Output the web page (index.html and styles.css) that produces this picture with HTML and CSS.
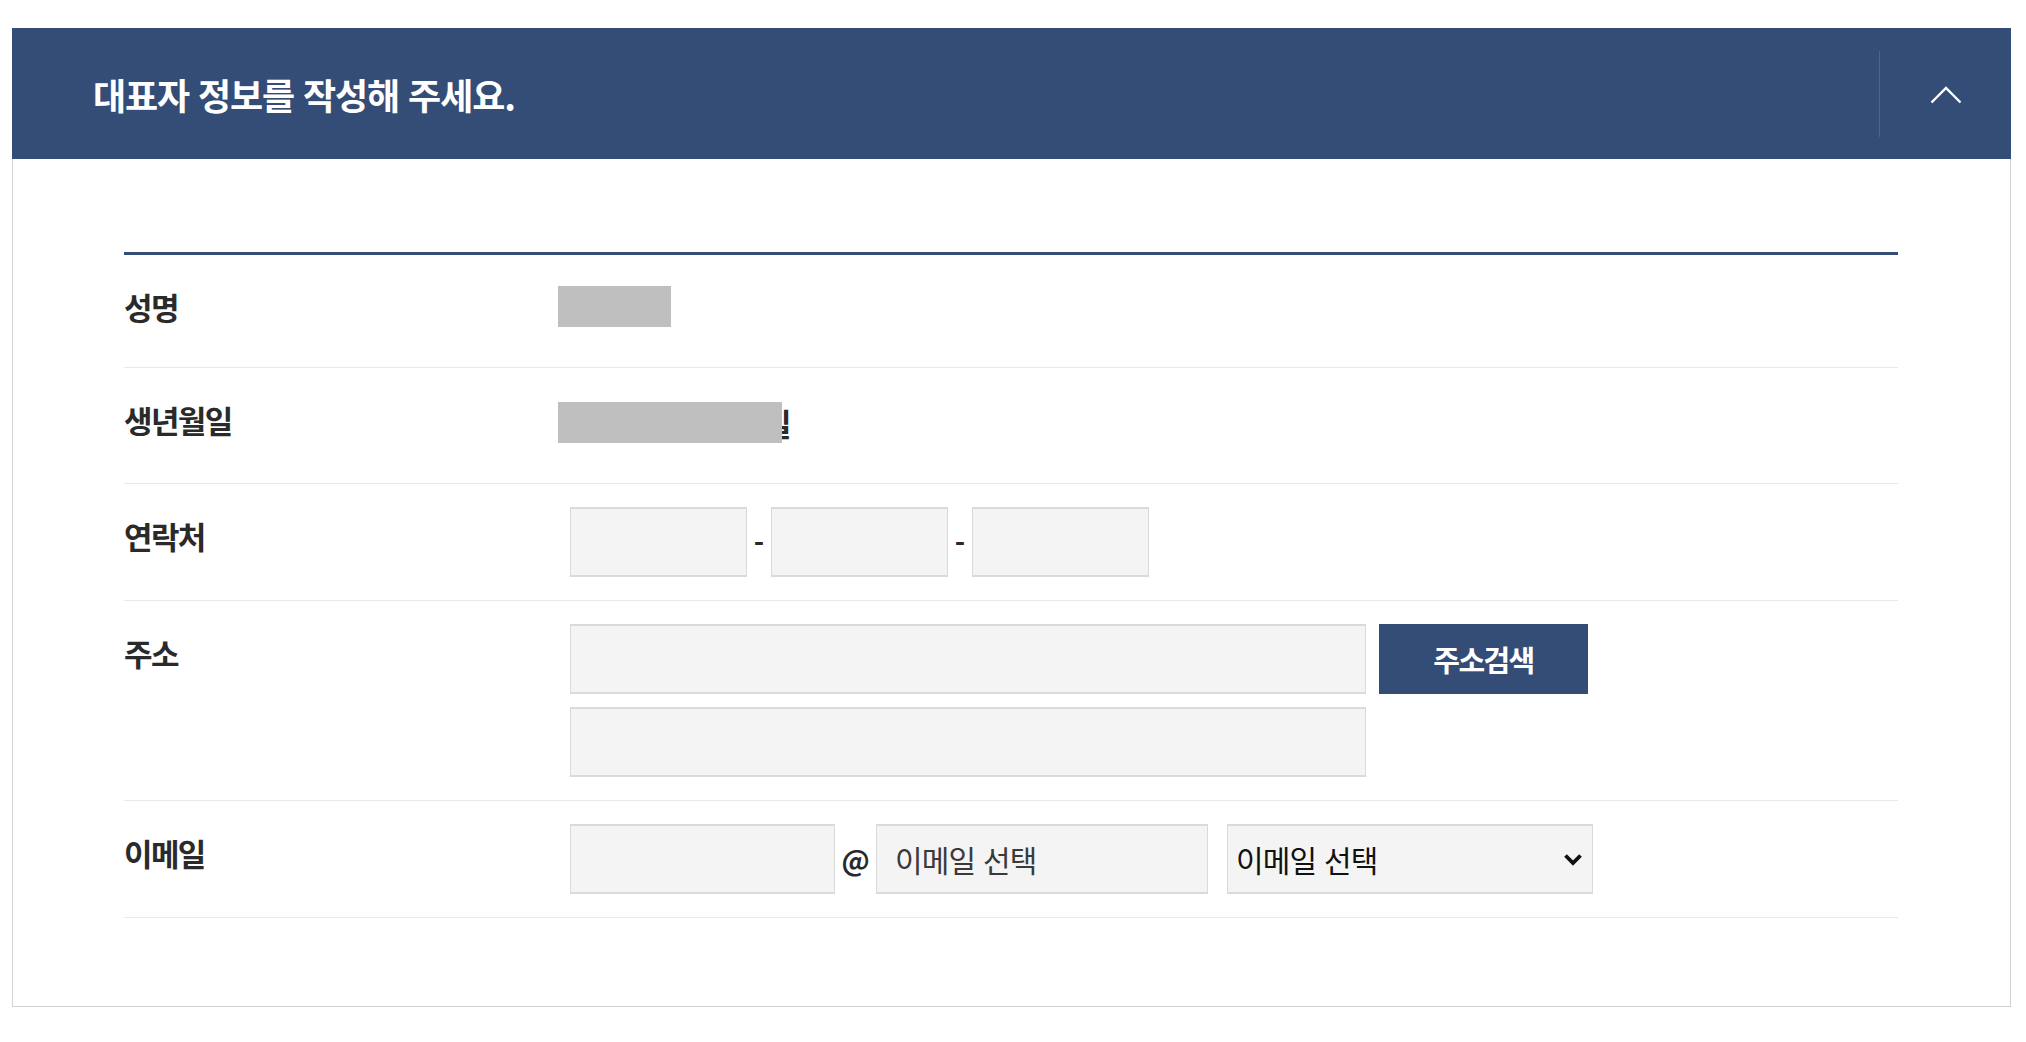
FILE: index.html
```html
<!DOCTYPE html>
<html lang="ko">
<head>
<meta charset="utf-8">
<title>대표자 정보</title>
<link rel="stylesheet" href="styles.css">
</head>
<body>
<section class="card">
  <header class="card-head">
    <h2 class="card-title">대표자 정보를 작성해 주세요.</h2>
    <div class="head-divider"></div>
    <button class="toggle" type="button" aria-label="접기">
      <svg width="32" height="19" viewBox="0 0 32 19"><path d="M1.5 17.5 L16 3 L30.5 17.5" fill="none" stroke="#fff" stroke-width="2.4"/></svg>
    </button>
  </header>
  <div class="card-body">
    <div class="form-table">
      <div class="row row-text row-name">
        <div class="label">성명</div>
        <div class="value"><span class="redact redact-name"></span></div>
      </div>
      <div class="row row-text row-birth">
        <div class="label">생년월일</div>
        <div class="value"><span class="redact redact-birth"></span><span class="tail">일</span></div>
      </div>
      <div class="row">
        <div class="label">연락처</div>
        <div class="value inline">
          <input class="field phone" type="text">
          <span class="sep">-</span>
          <input class="field phone" type="text">
          <span class="sep">-</span>
          <input class="field phone" type="text">
        </div>
      </div>
      <div class="row">
        <div class="label">주소</div>
        <div class="value stack">
          <div class="inline">
            <input class="field addr" type="text">
            <button class="search-btn" type="button">주소검색</button>
          </div>
          <div class="inline">
            <input class="field addr" type="text">
          </div>
        </div>
      </div>
      <div class="row">
        <div class="label">이메일</div>
        <div class="value inline">
          <input class="field mail-id" type="text">
          <span class="at">@</span>
          <input class="field mail-domain" type="text" value="이메일 선택">
          <div class="select-wrap">
            <select class="field mail-select">
              <option>이메일 선택</option>
            </select>
            <svg class="select-arrow" width="20" height="13" viewBox="0 0 20 13"><path d="M2.5 2.5 L10 10 L17.5 2.5" fill="none" stroke="#111" stroke-width="3.8"/></svg>
          </div>
        </div>
      </div>
    </div>
  </div>
</section>
</body>
</html>
```
FILE: styles.css
```css
* { box-sizing: border-box; }
html, body { margin: 0; padding: 0; background: #fff; }
body {
  font-family: "Noto Sans CJK KR", "Noto Sans", sans-serif;
  color: #2a2a2a;
  padding: 28px 15px 0 12px;
}
.card {
  border: 1px solid #d2d2d2;
}
.card-head {
  background: #344d77;
  height: 131px;
  margin: -1px -1px 0 -1px;
  display: flex;
  align-items: center;
}
.card-title {
  margin: 0;
  flex: 1;
  padding-left: 81px;
  color: #fff;
  font-size: 36px;
  font-weight: 700;
  letter-spacing: -1.1px;
  line-height: 1;
}
.head-divider {
  width: 1px;
  height: 86px;
  background: #4e648c;
}
.toggle {
  width: 131px;
  height: 131px;
  border: 0;
  background: transparent;
  padding: 2px 0 0 0;
  display: flex;
  align-items: center;
  justify-content: center;
}
.card-body {
  padding: 93px 112px 88px 111px;
}
.form-table {
  border-top: 3px solid #344d77;
}
.row {
  display: grid;
  grid-template-columns: 434px 1fr;
  border-bottom: 1px solid #e9e9e9;
}
.label {
  padding-top: 32px;
  line-height: 40px;
  font-size: 31px;
  font-weight: 700;
  letter-spacing: -1.6px;
  color: #2a2a2a;
}
.value {
  padding: 23px 0 23px 12px;
}
.row-text .value {
  display: flex;
  align-items: center;
}
.row-name .value {
  padding: 31px 0 40px 0;
}
.row-birth .value {
  padding: 34px 0 40px 0;
}
.redact {
  display: inline-block;
  height: 41px;
  background: #bfbfbf;
  position: relative;
  z-index: 1;
}
.redact-name { width: 113px; }
.redact-birth { width: 224px; margin-right: -19px; }
.tail {
  font-size: 31px;
  font-weight: 700;
  line-height: 41px;
  letter-spacing: -1px;
}
.inline {
  display: flex;
  align-items: center;
}
.stack {
  display: flex;
  flex-direction: column;
  gap: 13px;
}
.field {
  height: 70px;
  background: #f4f4f4;
  border-style: solid;
  border-color: #dadada;
  border-width: 2px 1px;
  border-radius: 0;
  font-family: "Noto Sans CJK KR", "Noto Sans", sans-serif;
  font-size: 30px;
  color: #333;
  outline: none;
  margin: 0;
}
.phone { width: 177px; }
.sep {
  width: 24px;
  text-align: center;
  font-size: 28px;
  font-weight: 700;
  color: #2a2a2a;
}
.addr { width: 796px; }
.search-btn {
  margin-left: 13px;
  width: 209px;
  height: 70px;
  border: 0;
  background: #344d77;
  color: #fff;
  font-family: "Noto Sans CJK KR", "Noto Sans", sans-serif;
  font-size: 29px;
  font-weight: 700;
  letter-spacing: -1.6px;
}
.mail-id { width: 265px; }
.at {
  width: 41px;
  text-align: center;
  font-size: 28px;
  font-weight: 700;
  color: #2a2a2a;
}
.mail-domain {
  width: 332px;
  padding-left: 18px;
  letter-spacing: -0.8px;
  color: #3a3a3a;
}
.select-wrap {
  position: relative;
  margin-left: 19px;
}
.mail-select {
  width: 366px;
  appearance: none;
  -webkit-appearance: none;
  padding-left: 8px;
  letter-spacing: -0.8px;
  color: #111;
}
.select-arrow {
  position: absolute;
  right: 10px;
  top: 29px;
  pointer-events: none;
}
```
